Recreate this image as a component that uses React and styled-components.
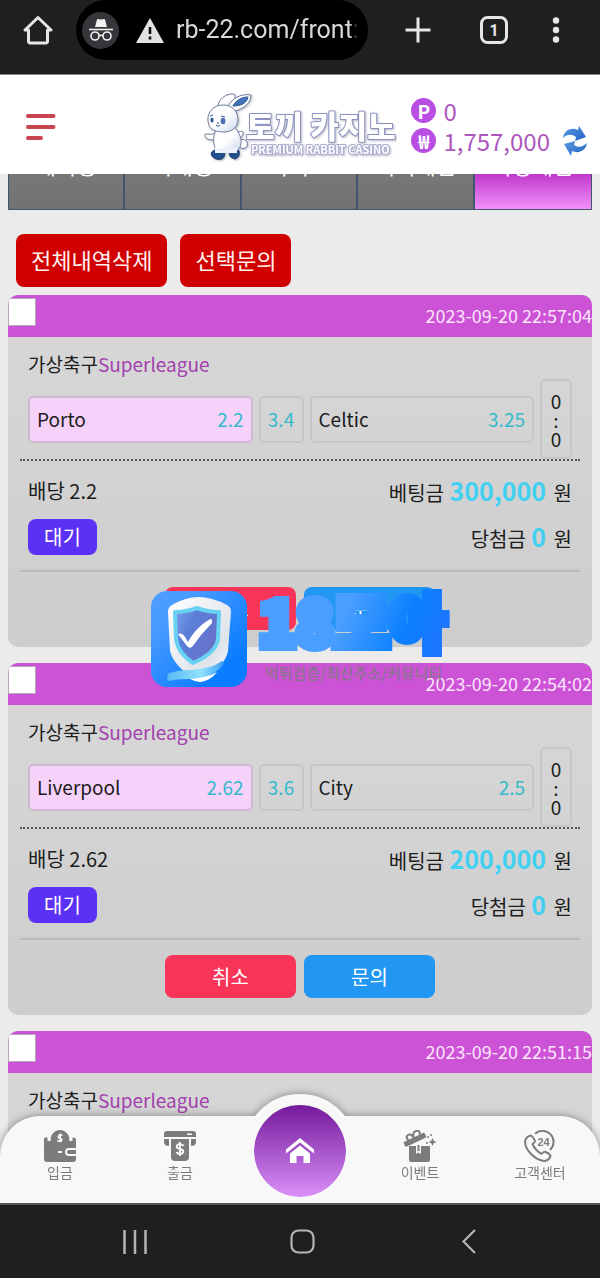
import React from "react";
import styled, { createGlobalStyle, css } from "styled-components";

const GlobalStyle = createGlobalStyle`
  *, *::before, *::after { box-sizing: border-box; }
  body {
    margin: 0;
    background: #ebebeb;
    color: #1c1c1c;
    font-family: "Noto Sans CJK KR", "Noto Sans", sans-serif;
  }
  button, input { font-family: inherit; }
  button { margin: 0; padding: 0; border: 0; background: none; color: inherit; cursor: pointer; }
  a { color: inherit; text-decoration: none; }
  svg { display: block; flex: none; }
`;

const Screen = styled.div`
  height: 100vh;
  display: flex;
  flex-direction: column;
  overflow: hidden;
`;

/* Browser chrome */

const BrowserBar = styled.div`
  flex: none;
  display: flex;
  height: 74px;
  padding-bottom: 14px;
  background: #1f1f1f;
  color: #e6e6e6;
`;

const BarButton = styled.button`
  flex: none;
  display: flex;
  align-items: center;
  justify-content: center;
  width: ${(p) => (p.$narrow ? "48px" : "76px")};
  height: 60px;
`;

const BarActions = styled.div`
  display: flex;
  padding: 0 20px 0 12px;
`;

const AddressPill = styled.label`
  flex: 1;
  min-width: 0;
  display: flex;
  align-items: center;
  padding: 0 10px 0 6px;
  border-radius: 30px;
  background: #000;
`;

const Incognito = styled.span`
  flex: none;
  display: flex;
  align-items: center;
  justify-content: center;
  width: 37px;
  height: 37px;
  margin-right: 17px;
  border-radius: 50%;
  background: #35363a;
`;

const AddressInput = styled.input`
  flex: 1;
  min-width: 0;
  margin-left: 12px;
  padding: 0;
  border: 0;
  outline: 0;
  background: none;
  color: #d8d8d8;
  font: 400 25px/32px Roboto, sans-serif;
  mask-image: linear-gradient(to right, #000 95%, transparent);
`;

/* Site header */

const SiteHeader = styled.header`
  flex: none;
  position: relative;
  z-index: 2;
  display: flex;
  align-items: center;
  height: 100px;
  padding: 0 13px 0 26px;
  border-top: 1px solid #8a8a8a;
  background: #fff;
`;

const MenuButton = styled.button`
  padding-top: 4px;
`;

const LogoLink = styled.a`
  margin: 4px 14px 0 auto;
`;

const Balances = styled.div`
  padding-top: 2px;
  color: #ad56bd;
  font-size: 24px;
`;

const Balance = styled.div`
  display: flex;
  align-items: center;
  gap: 7px;
  height: 30px;
  line-height: 30px;
`;

const Coin = styled.span`
  display: flex;
  align-items: center;
  justify-content: center;
  width: 25px;
  height: 25px;
  border-radius: 50%;
  background: #b84ee2;
  color: #fff;
  font-size: 19px;
  font-weight: 700;
  line-height: 24px;
`;

const RefreshButton = styled.button`
  margin-left: 6px;
`;

/* Page content */

const Content = styled.main`
  flex: 1;
  min-height: 0;
  position: relative;
  overflow: hidden;
`;

const Tabs = styled.nav`
  display: grid;
  grid-template-columns: repeat(5, 1fr);
  height: 92px;
  margin: -56px 8px 0;
  border: 1px solid #41566c;
`;

const Tab = styled.a`
  display: flex;
  align-items: center;
  justify-content: center;
  color: #fff;
  font-size: 22px;
  border-right: 2px solid #41566c;
  background: ${(p) =>
    p.$active ? "linear-gradient(#b01fc0 50%, #f290f8)" : "linear-gradient(#808080, #727272)"};

  &:last-child { border-right: 0; }
`;

const Toolbar = styled.div`
  display: flex;
  gap: 13px;
  padding: 24px 16px 8px;
`;

const DangerButton = styled.button`
  height: 53px;
  padding: 0 15px 3px;
  border-radius: 8px;
  background: #d00000;
  color: #fff0ee;
  font-size: 22px;
  line-height: 32px;
`;

const SlipList = styled.div`
  display: flex;
  flex-direction: column;
  gap: 16px;
  padding: 0 8px;
`;

const Slip = styled.article`
  flex: none;
  min-height: 352px;
  border-radius: 10px;
  overflow: hidden;
  background: linear-gradient(#d8d8d8, #cdcdcd);
`;

const SlipHeader = styled.header`
  display: flex;
  align-items: flex-start;
  justify-content: space-between;
  height: 42px;
  padding-top: 3px;
  background: #cc52d6;
`;

const SlipCheck = styled.input`
  appearance: none;
  width: 28px;
  height: 28px;
  margin: 0;
  border: 1px solid #b9a4bd;
  background: #fff;
`;

const SlipTime = styled.time`
  color: #fbe6fc;
  font-size: 18px;
  line-height: 34px;
`;

const SlipBody = styled.div`
  padding: 13px 12px 17px;
`;

const League = styled.h2`
  margin: 0;
  padding: 0 8px 2px;
  font-size: 19px;
  font-weight: 400;
  line-height: 27px;
`;

const LeagueName = styled.span`
  color: #a341b0;
`;

const Picks = styled.div`
  display: grid;
  grid-template-columns: 5fr 45px 5fr 32px;
  align-items: center;
  gap: 6px;
  padding: 0 8px;
  border-bottom: 2px dotted #555;
`;

const box = css`
  border: 2px solid #c6c6c6;
  border-radius: 5px;
`;

const Pick = styled.button`
  ${box}
  display: flex;
  align-items: center;
  justify-content: ${(p) => (p.$center ? "center" : "space-between")};
  height: 47px;
  padding: 0 ${(p) => (p.$center ? "0" : "7px")};
  font-size: 19px;
  line-height: 30px;
  ${(p) => p.$selected && "background: #f6d2fa; border-color: #cdb9d0;"}
`;

const Odds = styled.span`
  color: #35b9cb;
`;

const Score = styled.div`
  ${box}
  display: flex;
  flex-direction: column;
  align-items: center;
  justify-content: center;
  height: 80px;
  font-size: 19px;
  line-height: 19px;
`;

const Totals = styled.div`
  display: flex;
  flex-direction: column;
  gap: 12px;
  padding: 14px 8px 15px;
`;

const TotalRow = styled.div`
  display: flex;
  align-items: center;
  justify-content: space-between;
  height: ${(p) => (p.$tall ? "36px" : "32px")};
  font-size: 20px;
  line-height: 32px;
`;

const Amount = styled.b`
  margin: 0 3px 0 1px;
  color: #42d0f2;
  font-size: 25px;
`;

const Status = styled.span`
  padding: 0 16px 1px;
  border-radius: 8px;
  background: #5b32f5;
  color: #fff;
  line-height: 35px;
`;

const Actions = styled.div`
  display: flex;
  justify-content: center;
  gap: 8px;
  padding-top: 15px;
  border-top: 2px solid #bababa;
`;

const ActionButton = styled.button`
  width: 131px;
  height: 43px;
  border-radius: 8px;
  background: ${(p) => (p.$tone === "cancel" ? "#f83559" : "#2196f3")};
  color: #fff;
  font-size: 20px;
  line-height: 30px;
`;

/* Watermark laid over the list */

const Watermark = styled.div`
  position: absolute;
  top: 417px;
  left: 50%;
  display: flex;
  gap: 8px;
  transform: translateX(-50%);
  pointer-events: none;
`;

/* Bottom navigation */

const BottomNav = styled.nav`
  flex: none;
  position: relative;
  z-index: 1;
  display: grid;
  grid-template-columns: repeat(5, 1fr);
  height: 87px;
  margin-top: -87px;
  border-radius: 40px 40px 0 0;
  background: #f8f8f8;
  filter: drop-shadow(0 0 4px rgba(0, 0, 0, 0.4));
`;

const NavItem = styled.a`
  display: flex;
  flex-direction: column;
  align-items: center;
  padding-top: 14px;
  color: #7c7c7c;
  font-size: 14px;
  line-height: 20px;
`;

const HomeLink = styled.a`
  justify-self: center;
  display: flex;
  align-items: center;
  justify-content: center;
  width: 114px;
  height: 114px;
  margin-top: -22px;
  border: 11px solid #f8f8f8;
  border-radius: 50%;
  background: linear-gradient(#741a9c, #da90f8) padding-box;
`;

const SystemNav = styled.div`
  flex: none;
  position: relative;
  z-index: 2;
  display: grid;
  grid-template-columns: repeat(3, 28%);
  justify-content: center;
  height: 75px;
  padding-left: 4px;
  border-top: 2px solid #555;
  background: #1f1f1f;
  color: #b5b5b5;
`;

const SystemButton = styled.button`
  display: flex;
  align-items: center;
  justify-content: center;
`;

/* Drawings */

const HomeOutline = () => (
  <svg width="30" height="30" viewBox="0 0 30 30" fill="none" stroke="currentColor" strokeWidth="3" strokeLinejoin="round">
    <path d="M2 15 15 2.500 28 15H24.500V26.500a1.500 1.500 0 0 1-1.500 1.500H7a1.500 1.500 0 0 1-1.500-1.500V15Z" />
  </svg>
);

const IncognitoIcon = () => (
  <svg width="24" height="24" viewBox="0 0 24 24" fill="none" stroke="#f1f1f1" strokeWidth="1.600">
    <path d="M6 9 8 1.500q.3-.8 1.200-.5l1.800.5h2l1.800-.5q.9-.3 1.200.5L18 9Z" fill="#f1f1f1" stroke="none" />
    <path d="M0 11.500h24" />
    <circle cx="6" cy="18" r="4" />
    <circle cx="18" cy="18" r="4" />
    <path d="M10 18q2-1.500 4 0" />
  </svg>
);

const WarningIcon = () => (
  <svg width="28" height="25" viewBox="0 0 28 25">
    <path d="M14 0 28 25H0Z" fill="#e2e2e2" />
    <path d="M14 9v7M14 18.500v3" stroke="#111" strokeWidth="2.600" />
  </svg>
);

const PlusIcon = () => (
  <svg width="26" height="26" viewBox="0 0 26 26" stroke="currentColor" strokeWidth="3">
    <path d="M13 0.500v25M0.500 13h25" />
  </svg>
);

const TabsIcon = () => (
  <svg width="28" height="28" viewBox="0 0 28 28">
    <rect x="1.500" y="1.500" width="25" height="25" rx="6" fill="none" stroke="currentColor" strokeWidth="3" />
    <text x="14" y="19.500" textAnchor="middle" fontFamily="Roboto, sans-serif" fontWeight="700" fontSize="16" fill="currentColor">1</text>
  </svg>
);

const DotsIcon = () => (
  <svg width="8" height="26" viewBox="0 0 8 26" fill="currentColor">
    <circle cx="4" cy="3.500" r="3.200" />
    <circle cx="4" cy="13" r="3.200" />
    <circle cx="4" cy="22.500" r="3.200" />
  </svg>
);

const MenuIcon = () => (
  <svg width="30" height="26" viewBox="0 0 30 26" stroke="#c8444e" strokeWidth="4" strokeLinecap="round">
    <path d="M2 2h25.500M2 13h25.500M2 24h13" />
  </svg>
);

const Logo = () => (
  <svg width="194" height="70" viewBox="0 0 194 70" role="img" aria-label="토끼 카지노">
    <defs>
      <filter id="logoShade" x="-10%" y="-10%" width="125%" height="130%">
        <feDropShadow dx="1" dy="1" stdDeviation="1" floodColor="#6b6f85" floodOpacity="0.5" />
      </filter>
      <linearGradient id="fur" x1="0" y1="0" x2="1" y2="1">
        <stop offset="0.500" stopColor="#fff" />
        <stop offset="1" stopColor="#c9d6ee" />
      </linearGradient>
    </defs>
    <g filter="url(#logoShade)" stroke="#6f7d99" strokeWidth="1" strokeLinejoin="round">
      <path d="M15 16C14 8 23 1 31 2c3 2 0 8-6 14Z" fill="url(#fur)" />
      <path d="M24 17C27 7 38 1 48 3c0 9-9 15-20 17Z" fill="#fff" />
      <path d="M30 14c3-6 9-9 15-9-1 6-7 9-15 9Z" fill="#3f73b5" stroke="#2d5a99" />
      <circle cx="40" cy="52" r="4.500" fill="#fff" />
      <path d="M14 40C8 45 2 40 2 43c-1 5 8 6 14 4Z" fill="#fff" />
      <path d="M28 39c6 3 11-1 12 1 1 5-6 8-12 6Z" fill="#fff" />
      <path d="M14 36c-5 9-4 17 0 24h19c8-6 6-17-2-25Z" fill="url(#fur)" />
      <path d="M9 64c-2-3 0-5 3-6h7c4 3 3 7 0 9-4 1-8 0-10-3Z" fill="#234f8d" stroke="#1c3d70" />
      <path d="M27 60c3-3 6-2 9-1 1 3 0 7-4 8-4-1-7-3-5-7Z" fill="#234f8d" stroke="#1c3d70" />
      <path d="M12 55q5 4 10 1q5 4 12-1v6H12Z" fill="#eef3fb" stroke="none" />
      <path d="M5 29c-1-9 6-16 15-16 10 0 15 7 15 15 0 7-6 12-14 12-7 0-14-2-15-7Z" fill="url(#fur)" />
      <ellipse cx="9" cy="28" rx="1.600" ry="2.600" fill="#2e5795" stroke="none" />
      <ellipse cx="20" cy="29" rx="2.400" ry="3.200" fill="#4d72b1" stroke="none" />
      <path d="M13 33q2 3 4 0M14 31h2M7 24l3-1M18 24l4 1" fill="none" stroke="#34568d" />
    </g>
    <g filter="url(#logoShade)" fontFamily="'Noto Sans CJK KR', sans-serif" fill="#fff" strokeLinejoin="round">
      <text x="43" y="46" fontSize="31" fontWeight="900" stroke="#8a91c0" strokeWidth="2" paintOrder="stroke">토끼 카지노</text>
      <text x="48" y="62" fontSize="11" fontWeight="700" stroke="#acacd2" strokeWidth="2" paintOrder="stroke">PREMIUM RABBIT CASINO</text>
    </g>
  </svg>
);

const RefreshIcon = () => (
  <svg width="24" height="30" viewBox="0 0 24 30">
    <defs>
      <linearGradient id="blueArrow" x1="0" y1="0" x2="1" y2="1">
        <stop offset="0" stopColor="#5b9be2" />
        <stop offset="1" stopColor="#1f62c4" />
      </linearGradient>
    </defs>
    <path d="M0 12C1 4 9 1 15 4L16 0l7 11-11 4 1-4C9 8 4 8 0 12Z" fill="url(#blueArrow)" />
    <path d="M24 17c-1 8-9 11-15 8l-1 5L1 18l11-3-1 4c4 3 9 2 13-2Z" fill="url(#blueArrow)" />
  </svg>
);

const WalletIcon = () => (
  <svg width="32" height="32" viewBox="0 0 32 32" fill="currentColor">
    <path d="M0 9q0-1.500 1.500-1.500H3q.5 0 .5 1V11h3.200C6 4 11 0 16 0s10 4 9.300 11h3.200V8.500q0-1 .5-1 3 0 3 2.500V18h-7q-4 0-4 4t4 4h7v3q0 3-3 3H3q-3 0-3-3Z" />
    <path d="M25 20h7v4h-7q-2 0-2-2t2-2Z" />
    <path d="M14 22h4" stroke="#f8f8f8" strokeWidth="2" />
    <path d="M18.500 5.500q-3-1.500-4 .5t1.500 2.200q2.500.8 1.500 2.500t-4-.2M16.200 3.500v8.500" fill="none" stroke="#f8f8f8" strokeWidth="1.600" />
  </svg>
);

const WithdrawIcon = () => (
  <svg width="32" height="32" viewBox="0 0 32 32" fill="currentColor">
    <path fillRule="evenodd" d="M3 1h26q3 0 3 3v3H0V4q0-3 3-3Zm20 2.500v1.600h5V3.500Z" />
    <path d="M0 9h5v7q-5 0-5-4ZM32 9h-5v7q5 0 5-4ZM7 9h18v18q0 4-4 4H11q-4 0-4-4Z" />
    <path d="M19.500 16q-1-2-3.500-2t-3.200 2 3.200 3 3.200 3-3.200 2-3.500-2M16 12v14" fill="none" stroke="#f8f8f8" strokeWidth="2" />
  </svg>
);

const GiftIcon = () => (
  <svg width="34" height="32" viewBox="0 0 34 32" fill="currentColor">
    <path d="M1 12 20 3q1.500-.5 2 .8L23 6q.5 1.300-1 2L4 16.500q-1.500.5-2-.8l-1.200-2Q.5 12.500 1 12Z" />
    <path d="M6 11q-4-4-1-6t6 3q-2-6 2-7t4 4" fill="none" stroke="currentColor" strokeWidth="2" />
    <path d="M6 16h7v8l2.500-1.500L18 24v-8h9v14q0 2-2 2H8q-2 0-2-2Z" />
    <path d="M14.500 15h2v6.500l-1-.6-1 .6Z" />
    <path d="m29.500 8 1.200 2.800 2.800 1.200-2.800 1.200L29.500 16l-1.200-2.800-2.800-1.200 2.800-1.200Z" />
    <circle cx="25" cy="7" r="1" />
    <circle cx="28" cy="5" r="1" />
    <circle cx="24" cy="13" r="1" />
  </svg>
);

const SupportIcon = () => (
  <svg width="32" height="32" viewBox="0 0 32 32" fill="none" stroke="currentColor" strokeWidth="2" strokeLinejoin="round">
    <path d="M11 3.800A10.500 10.500 0 1 1 26 20" />
    <path d="M7 5.500Q9.500 7 11 11q0 1.500-2.500 3Q11 20 17.500 24q2-2.500 3.500-2.200 4 1.200 5.500 4-1 4.200-5.500 5.200Q14 31 7 24 .5 17 1.200 11 2 6.500 7 5.500Z" />
    <text x="19.500" y="16" textAnchor="middle" fontFamily="'Liberation Sans', sans-serif" fontWeight="700" fontSize="11" fill="currentColor" stroke="none">24</text>
  </svg>
);

const HouseIcon = () => (
  <svg width="28" height="26" viewBox="0 0 28 26" fill="#fff">
    <path d="M14 0 28 11.500V15.500L14 4.500 0 15.500V11.500Z" />
    <path d="M14 7.500 24 15.500V25h-6.500v-7h-7v7H4V15.500Z" />
  </svg>
);

const ShieldBadge = () => (
  <svg width="96" height="97" viewBox="0 0 96 97">
    <defs>
      <linearGradient id="tile" x1="0" y1="0" x2="1" y2="1">
        <stop offset="0.200" stopColor="#4a9cff" />
        <stop offset="0.800" stopColor="#0a7cff" />
      </linearGradient>
      <linearGradient id="plate" x1="0" y1="0" x2="1" y2="1">
        <stop offset="0" stopColor="#fff" />
        <stop offset="0.700" stopColor="#dfe3ea" />
        <stop offset="1" stopColor="#fff" />
      </linearGradient>
      <linearGradient id="core" x1="0" y1="0" x2="1" y2="0.600">
        <stop offset="0" stopColor="#7d9ee8" />
        <stop offset="0.400" stopColor="#5a7fd8" />
        <stop offset="1" stopColor="#6b6fc8" />
      </linearGradient>
      <linearGradient id="ribbon" x1="0" y1="0" x2="1" y2="0">
        <stop offset="0" stopColor="#58b8f0" />
        <stop offset="0.600" stopColor="#8fe3ff" />
        <stop offset="1" stopColor="#3f9df0" />
      </linearGradient>
    </defs>
    <rect width="96" height="96" rx="16" fill="url(#tile)" />
    <path d="M47 6q14 0 29 8 4 2 4 7L77 60Q74 76 48 91 23 76 19 60L17 21q0-5 4-7Q35 6 47 6Z" fill="url(#plate)" />
    <path d="M46 17q11 4 22 4l-1 27q-2 14-25 24Q27 62 25 48L24 21q11 0 22-4Z" fill="url(#core)" stroke="#69d2f4" strokeWidth="4" strokeLinejoin="round" />
    <path d="M27 43q4-2 7 3l3 5Q44 37 59 28q3 0 2 4Q50 43 41 56q-3 2-5-1Z" fill="#fff" />
    <path d="M18 82q10-3 22-3Q60 78 71 70q3 2 0 5Q60 88 38 88q-13 0-21 2-2-5 1-8Z" fill="url(#ribbon)" />
    <path d="M39 88q17-1 27-7-6 8-16 10-6 0-11-3Z" fill="#fff" />
  </svg>
);

const WatermarkTitle = () => (
  <svg width="194" height="97" viewBox="0 0 194 97" overflow="visible">
    <defs>
      <linearGradient id="brand" gradientUnits="userSpaceOnUse" x1="0" y1="0" x2="190" y2="75">
        <stop offset="0.450" stopColor="#4a9eff" />
        <stop offset="0.750" stopColor="#0a80ff" />
        <stop offset="1" stopColor="#2273ff" />
      </linearGradient>
    </defs>
    <g fontFamily="'Noto Sans CJK KR', sans-serif">
      <text x="4" y="55" fontSize="61" fontWeight="900" fill="url(#brand)" stroke="url(#brand)" strokeWidth="10">18모아</text>
      <text x="10" y="88" fontSize="15" fontWeight="500" fill="#7e7a80" fillOpacity="0.850">먹튀검증/최신주소/커뮤니티</text>
    </g>
  </svg>
);

const RecentsIcon = () => (
  <svg width="24" height="24" viewBox="0 0 24 24" stroke="currentColor" strokeWidth="2.500">
    <path d="M1.500 0v24M12 0v24M22.500 0v24" />
  </svg>
);

const SystemHomeIcon = () => (
  <svg width="25" height="25" viewBox="0 0 25 25" fill="none" stroke="currentColor" strokeWidth="2.200">
    <rect x="1.500" y="1.500" width="22" height="22" rx="7" />
  </svg>
);

const BackIcon = () => (
  <svg width="14" height="25" viewBox="0 0 14 25" fill="none" stroke="currentColor" strokeWidth="2.200">
    <path d="M13 1 1.500 12.500 13 24" />
  </svg>
);

const tabs = ["해외형", "국내형", "카지노", "미니게임", "가상게임"];

const slips = [
  { time: "2023-09-20 22:57:04", home: "Porto", homeOdds: "2.2", draw: "3.4", away: "Celtic", awayOdds: "3.25", stake: "300,000" },
  { time: "2023-09-20 22:54:02", home: "Liverpool", homeOdds: "2.62", draw: "3.6", away: "City", awayOdds: "2.5", stake: "200,000" },
  { time: "2023-09-20 22:51:15" },
];

function BetSlip({ slip }) {
  return (
    <Slip>
      <SlipHeader>
        <SlipCheck type="checkbox" aria-label={`${slip.time} 선택`} />
        <SlipTime>{slip.time}</SlipTime>
      </SlipHeader>
      <SlipBody>
        <League>
          가상축구<LeagueName>Superleague</LeagueName>
        </League>
        {slip.home && (
          <>
            <Picks>
              <Pick $selected>
                {slip.home}
                <Odds>{slip.homeOdds}</Odds>
              </Pick>
              <Pick $center>
                <Odds>{slip.draw}</Odds>
              </Pick>
              <Pick>
                {slip.away}
                <Odds>{slip.awayOdds}</Odds>
              </Pick>
              <Score>
                <span>0</span>
                <span>:</span>
                <span>0</span>
              </Score>
            </Picks>
            <Totals>
              <TotalRow>
                <span>배당 {slip.homeOdds}</span>
                <span>
                  베팅금 <Amount>{slip.stake}</Amount> 원
                </span>
              </TotalRow>
              <TotalRow $tall>
                <Status>대기</Status>
                <span>
                  당첨금 <Amount>0</Amount> 원
                </span>
              </TotalRow>
            </Totals>
            <Actions>
              <ActionButton $tone="cancel">취소</ActionButton>
              <ActionButton $tone="ask">문의</ActionButton>
            </Actions>
          </>
        )}
      </SlipBody>
    </Slip>
  );
}

export default function App() {
  return (
    <Screen>
      <GlobalStyle />
      <BrowserBar>
        <BarButton aria-label="홈"><HomeOutline /></BarButton>
        <AddressPill>
          <Incognito><IncognitoIcon /></Incognito>
          <WarningIcon />
          <AddressInput aria-label="주소" defaultValue="rb-22.com/front:" />
        </AddressPill>
        <BarActions>
          <BarButton aria-label="새 탭"><PlusIcon /></BarButton>
          <BarButton aria-label="탭 목록"><TabsIcon /></BarButton>
          <BarButton $narrow aria-label="더보기"><DotsIcon /></BarButton>
        </BarActions>
      </BrowserBar>

      <SiteHeader>
        <MenuButton aria-label="메뉴"><MenuIcon /></MenuButton>
        <LogoLink href="#"><Logo /></LogoLink>
        <Balances>
          <Balance><Coin>P</Coin>0</Balance>
          <Balance>
            <Coin>₩</Coin>1,757,000
            <RefreshButton aria-label="새로고침"><RefreshIcon /></RefreshButton>
          </Balance>
        </Balances>
      </SiteHeader>

      <Content>
        <Tabs>
          {tabs.map((name, i) => (
            <Tab key={name} href="#" $active={i === tabs.length - 1}>{name}</Tab>
          ))}
        </Tabs>
        <Toolbar>
          <DangerButton>전체내역삭제</DangerButton>
          <DangerButton>선택문의</DangerButton>
        </Toolbar>
        <SlipList>
          {slips.map((slip) => <BetSlip key={slip.time} slip={slip} />)}
        </SlipList>
        <Watermark>
          <ShieldBadge />
          <WatermarkTitle />
        </Watermark>
      </Content>

      <BottomNav>
        <NavItem href="#"><WalletIcon />입금</NavItem>
        <NavItem href="#"><WithdrawIcon />출금</NavItem>
        <HomeLink href="#" aria-label="홈"><HouseIcon /></HomeLink>
        <NavItem href="#"><GiftIcon />이벤트</NavItem>
        <NavItem href="#"><SupportIcon />고객센터</NavItem>
      </BottomNav>

      <SystemNav>
        <SystemButton aria-label="최근 앱"><RecentsIcon /></SystemButton>
        <SystemButton aria-label="홈 화면"><SystemHomeIcon /></SystemButton>
        <SystemButton aria-label="뒤로"><BackIcon /></SystemButton>
      </SystemNav>
    </Screen>
  );
}
